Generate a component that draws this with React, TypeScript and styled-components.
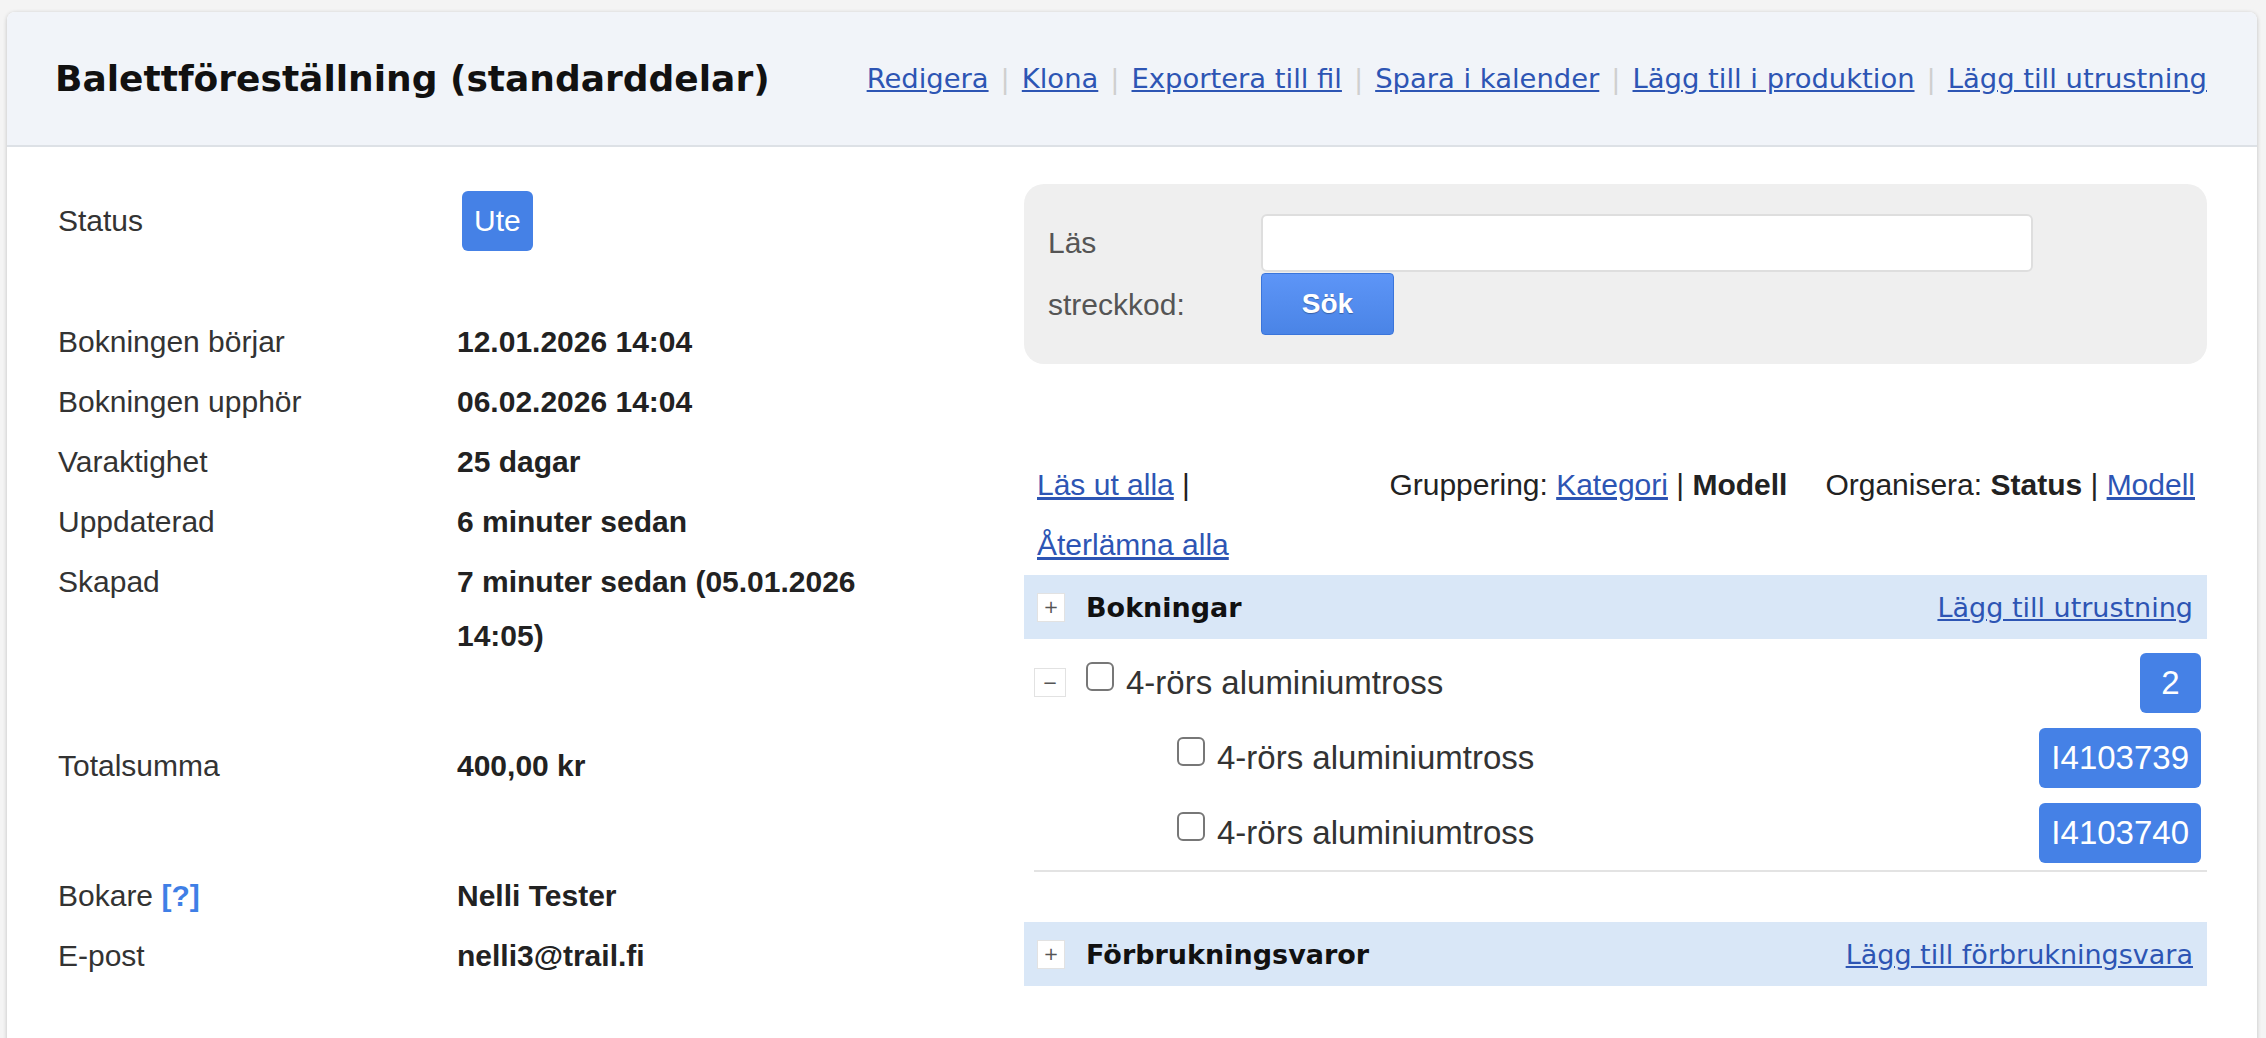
import React from 'react';
import styled, { createGlobalStyle } from 'styled-components';

const GlobalStyle = createGlobalStyle`
  html, body {
    margin: 0;
    padding: 0;
    background: #f4f4f4;
  }
  body {
    font-family: 'Liberation Sans', Arial, Helvetica, sans-serif;
    color: #333;
  }
`;

const Page = styled.div`
  height: 100vh;
  box-sizing: border-box;
  padding: 12px 9px 0 7px;
  overflow: hidden;
`;

const Card = styled.div`
  background: #fff;
  border-radius: 8px;
  box-shadow: 0 1px 4px rgba(0, 0, 0, 0.22);
  min-height: 1100px;
`;

const Header = styled.header`
  display: flex;
  align-items: center;
  justify-content: space-between;
  height: 133px;
  padding: 0 50px 0 48px;
  background: #f1f4f9;
  border-bottom: 2px solid #dde1e6;
  border-radius: 8px 8px 0 0;
  font-family: 'DejaVu Sans', Verdana, sans-serif;
`;

const Title = styled.h1`
  margin: 0;
  font-size: 36px;
  font-weight: bold;
  color: #111;
`;

const HeaderLinks = styled.nav`
  display: flex;
  align-items: center;
  font-size: 27.4px;
`;

const Link = styled.a`
  color: #2d55b4;
  text-decoration: underline;
  cursor: pointer;
`;

const Sep = styled.span`
  color: #cfcfcf;
  margin: 0 12px;
`;

const Body = styled.div`
  display: flex;
  padding: 37px 50px 0 51px;
`;

const Details = styled.div`
  width: 840px;
  padding-top: 7px;
  font-size: 30px;
`;

const DetailRow = styled.div<{ $gap?: number }>`
  display: grid;
  grid-template-columns: 399px 440px;
  align-items: center;
  line-height: 54px;
  padding: 3px 0;
  margin-top: ${(p) => p.$gap || 0}px;
  color: #333;
`;

const StatusRow = styled(DetailRow)`
  padding: 0;
  height: 60px;
`;

const Label = styled.span`
  align-self: start;
`;

const Value = styled.div`
  font-weight: bold;
  color: #222;
  align-self: start;
`;

const Help = styled.span`
  color: #3f7fe6;
  font-weight: bold;
`;

const Badge = styled.span<{ $size?: number; $shift?: number }>`
  display: inline-flex;
  align-items: center;
  justify-content: center;
  box-sizing: border-box;
  height: 60px;
  min-width: 61px;
  padding: 0 12px;
  margin-left: ${(p) => p.$shift || 0}px;
  border-radius: 6px;
  background: #4581e6;
  color: #fff;
  font-size: ${(p) => p.$size || 30}px;
  font-weight: normal;
  line-height: 1;
`;

const Side = styled.div`
  width: 1183px;
  margin-left: auto;
`;

const SearchBox = styled.div`
  display: flex;
  align-items: center;
  background: #efefef;
  border-radius: 20px;
  padding: 28px 24px;
`;

const SearchLabel = styled.label`
  width: 170px;
  margin-right: 43px;
  font-size: 30px;
  line-height: 62px;
  color: #555;
`;

const SearchFields = styled.div`
  display: flex;
  flex-direction: column;
  align-items: flex-start;
  gap: 1px;
`;

const Input = styled.input`
  box-sizing: border-box;
  width: 772px;
  height: 58px;
  border: 2px solid #dedede;
  border-radius: 6px;
  background: #fff;
  outline: none;
`;

const SearchButton = styled.button`
  box-sizing: border-box;
  width: 133px;
  height: 62px;
  border: 1px solid #3a75db;
  border-radius: 4px;
  background: linear-gradient(#5d95f7, #4a84e6);
  color: #fff;
  font-family: 'Liberation Sans', Arial, sans-serif;
  font-size: 28px;
  font-weight: bold;
  text-shadow: 0 1px 1px rgba(0, 0, 0, 0.3);
  cursor: pointer;
`;

const Toolbar = styled.div`
  display: flex;
  justify-content: space-between;
  align-items: flex-start;
  margin-top: 91px;
  padding: 0 12px 0 13px;
  font-size: 30px;
  line-height: 60px;
  color: #222;
`;

const ToolbarLeft = styled.div`
  width: 250px;
`;

const ToolGroup = styled.span<{ $gap?: number }>`
  margin-left: ${(p) => p.$gap || 0}px;
`;

const Strong = styled.b`
  color: #222;
`;

const SectionBar = styled.div<{ $gap?: number }>`
  display: flex;
  align-items: center;
  height: 64px;
  margin-top: ${(p) => p.$gap || 0}px;
  padding: 0 14px 0 13px;
  background: #d9e7f7;
  font-family: 'DejaVu Sans', Verdana, sans-serif;
  font-size: 27px;
`;

const ToggleBox = styled.span<{ $wide?: boolean }>`
  display: inline-flex;
  align-items: center;
  justify-content: center;
  box-sizing: border-box;
  width: ${(p) => (p.$wide ? 32 : 28)}px;
  height: 29px;
  background: #fff;
  border: 1px solid #e2e2e2;
  color: #555;
  font-family: 'DejaVu Sans', sans-serif;
  font-size: 18px;
  line-height: 1;
`;

const SectionTitle = styled.span`
  margin-left: 21px;
  font-weight: bold;
  color: #111;
`;

const SectionLink = styled(Link)`
  margin-left: auto;
`;

const ItemList = styled.div`
  margin-left: 10px;
  padding-top: 6px;
  border-bottom: 2px solid #e3e3e3;
`;

const ItemRow = styled.div<{ $indent?: number }>`
  display: flex;
  align-items: center;
  height: 75px;
  padding: 0 6px 0 ${(p) => p.$indent || 0}px;
  font-size: 33px;
  color: #333;
`;

const Checkbox = styled.span<{ $offset?: number }>`
  box-sizing: border-box;
  width: 28px;
  height: 29px;
  margin: 0 12px 12px ${(p) => p.$offset || 0}px;
  border: 2px solid #777;
  border-radius: 6px;
  background: #fff;
`;

const ItemName = styled.span`
  flex: 1;
`;

const headerLinks = [
  'Redigera',
  'Klona',
  'Exportera till fil',
  'Spara i kalender',
  'Lägg till i produktion',
  'Lägg till utrustning',
];

const details = [
  { label: 'Bokningen upphör', value: '06.02.2026 14:04' },
  { label: 'Varaktighet', value: '25 dagar' },
  { label: 'Uppdaterad', value: '6 minuter sedan' },
  { label: 'Skapad', value: '7 minuter sedan (05.01.2026 14:05)' },
];

const units = ['I4103739', 'I4103740'];

export default function App() {
  return (
    <Page>
      <GlobalStyle />
      <Card>
        <Header>
          <Title>Balettföreställning (standarddelar)</Title>
          <HeaderLinks>
            {headerLinks.map((l, i) => (
              <React.Fragment key={l}>
                {i > 0 && <Sep>|</Sep>}
                <Link>{l}</Link>
              </React.Fragment>
            ))}
          </HeaderLinks>
        </Header>

        <Body>
          <Details>
            <StatusRow>
              <span>Status</span>
              <div>
                <Badge $shift={5}>Ute</Badge>
              </div>
            </StatusRow>
            <DetailRow $gap={61}>
              <Label>Bokningen börjar</Label>
              <Value>12.01.2026 14:04</Value>
            </DetailRow>
            {details.map((d) => (
              <DetailRow key={d.label}>
                <Label>{d.label}</Label>
                <Value>{d.value}</Value>
              </DetailRow>
            ))}
            <DetailRow $gap={70}>
              <Label>Totalsumma</Label>
              <Value>400,00 kr</Value>
            </DetailRow>
            <DetailRow $gap={70}>
              <Label>
                Bokare <Help>[?]</Help>
              </Label>
              <Value>Nelli Tester</Value>
            </DetailRow>
            <DetailRow>
              <Label>E-post</Label>
              <Value>nelli3@trail.fi</Value>
            </DetailRow>
          </Details>

          <Side>
            <SearchBox>
              <SearchLabel>Läs streckkod:</SearchLabel>
              <SearchFields>
                <Input type="text" />
                <SearchButton>Sök</SearchButton>
              </SearchFields>
            </SearchBox>

            <Toolbar>
              <ToolbarLeft>
                <Link>Läs ut alla</Link> | <Link>Återlämna alla</Link>
              </ToolbarLeft>
              <div>
                <ToolGroup>
                  Gruppering: <Link>Kategori</Link> | <Strong>Modell</Strong>
                </ToolGroup>
                <ToolGroup $gap={38}>
                  Organisera: <Strong>Status</Strong> | <Link>Modell</Link>
                </ToolGroup>
              </div>
            </Toolbar>

            <SectionBar>
              <ToggleBox>+</ToggleBox>
              <SectionTitle>Bokningar</SectionTitle>
              <SectionLink>Lägg till utrustning</SectionLink>
            </SectionBar>

            <ItemList>
              <ItemRow>
                <ToggleBox $wide>−</ToggleBox>
                <Checkbox $offset={20} />
                <ItemName>4-rörs aluminiumtross</ItemName>
                <Badge $size={33}>2</Badge>
              </ItemRow>
              {units.map((u) => (
                <ItemRow key={u} $indent={143}>
                  <Checkbox />
                  <ItemName>4-rörs aluminiumtross</ItemName>
                  <Badge $size={33}>{u}</Badge>
                </ItemRow>
              ))}
            </ItemList>

            <SectionBar $gap={50}>
              <ToggleBox>+</ToggleBox>
              <SectionTitle>Förbrukningsvaror</SectionTitle>
              <SectionLink>Lägg till förbrukningsvara</SectionLink>
            </SectionBar>
          </Side>
        </Body>
      </Card>
    </Page>
  );
}
